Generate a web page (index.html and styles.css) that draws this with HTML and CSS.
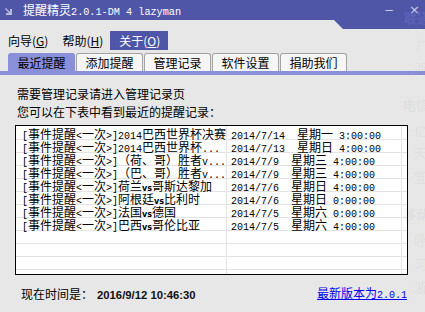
FILE: index.html
```html
<!DOCTYPE html>
<html lang="zh-CN">
<head>
    <meta charset="UTF-8">
    <title>提醒精灵</title>
    <link rel="stylesheet" href="styles.css">
</head>
<body>
    <div class="window">
        <div class="titlebar">
            <svg class="app-icon" width="8" height="8" viewBox="0 0 8 8">
                <polygon points="0,1 1,0 5,4 5,1 7,1 7,7 1,7 1,5 4,5" fill="#b8bad8"/>
            </svg>
            <span class="title">提醒精灵<span class="en">2.0.1-DM 4 lazyman</span></span>
            <span class="ctrl min">−</span>
            <span class="ctrl close">×</span>
        </div>

        <nav class="menu">
            <span class="menu-item">向导(<u>G</u>)</span>
            <span class="menu-item">帮助(<u>H</u>)</span>
            <span class="menu-item active">关于(<u>O</u>)</span>
        </nav>

        <div class="tabs">
            <span class="tab selected">最近提醒</span>
            <span class="tab">添加提醒</span>
            <span class="tab">管理记录</span>
            <span class="tab">软件设置</span>
            <span class="tab">捐助我们</span>
        </div>
        <div class="tab-line"></div>

        <div class="page">
            <p class="hint">需要管理记录请进入管理记录页</p>
            <p class="hint">您可以在下表中看到最近的提醒记录：</p>

            <div class="list">
                <div class="row">
                    <span class="cell name"><span class="en">[</span>事件提醒<span class="en">&lt;</span>一次<span class="en">&gt;]2014</span>巴西世界杯决赛</span>
                    <span class="cell when"><span class="en">2014/7/14  </span>星期一<span class="en"> 3:00:00</span></span>
                </div>
                <div class="row">
                    <span class="cell name"><span class="en">[</span>事件提醒<span class="en">&lt;</span>一次<span class="en">&gt;]2014</span>巴西世界杯<span class="en">...</span></span>
                    <span class="cell when"><span class="en">2014/7/13  </span>星期日<span class="en"> 4:00:00</span></span>
                </div>
                <div class="row">
                    <span class="cell name"><span class="en">[</span>事件提醒<span class="en">&lt;</span>一次<span class="en">&gt;]</span>（荷、哥）胜者<span class="en">v...</span></span>
                    <span class="cell when"><span class="en">2014/7/9  </span>星期三<span class="en"> 4:00:00</span></span>
                </div>
                <div class="row">
                    <span class="cell name"><span class="en">[</span>事件提醒<span class="en">&lt;</span>一次<span class="en">&gt;]</span>（巴、哥）胜者<span class="en">v...</span></span>
                    <span class="cell when"><span class="en">2014/7/9  </span>星期三<span class="en"> 4:00:00</span></span>
                </div>
                <div class="row">
                    <span class="cell name"><span class="en">[</span>事件提醒<span class="en">&lt;</span>一次<span class="en">&gt;]</span>荷兰<span class="vs">vs</span>哥斯达黎加</span>
                    <span class="cell when"><span class="en">2014/7/6  </span>星期日<span class="en"> 4:00:00</span></span>
                </div>
                <div class="row">
                    <span class="cell name"><span class="en">[</span>事件提醒<span class="en">&lt;</span>一次<span class="en">&gt;]</span>阿根廷<span class="vs">vs</span>比利时</span>
                    <span class="cell when"><span class="en">2014/7/6  </span>星期日<span class="en"> 0:00:00</span></span>
                </div>
                <div class="row">
                    <span class="cell name"><span class="en">[</span>事件提醒<span class="en">&lt;</span>一次<span class="en">&gt;]</span>法国<span class="vs">vs</span>德国</span>
                    <span class="cell when"><span class="en">2014/7/5  </span>星期六<span class="en"> 0:00:00</span></span>
                </div>
                <div class="row">
                    <span class="cell name"><span class="en">[</span>事件提醒<span class="en">&lt;</span>一次<span class="en">&gt;]</span>巴西<span class="vs">vs</span>哥伦比亚</span>
                    <span class="cell when"><span class="en">2014/7/5  </span>星期六<span class="en"> 4:00:00</span></span>
                </div>
                <div class="row"><span class="cell name"></span><span class="cell when"></span></div>
                <div class="row"><span class="cell name"></span><span class="cell when"></span></div>
                <div class="row"><span class="cell name"></span><span class="cell when"></span></div>
                <div class="row"><span class="cell name"></span><span class="cell when"></span></div>
            </div>

            <div class="status">
                <span class="now">现在时间是：<b class="clock">2016/9/12 10:46:30</b></span>
                <a class="update" href="#">最新版本为<span class="en">2.0.1</span></a>
            </div>
        </div>

        <!-- desktop text showing through the translucent window -->
        <div class="ghost">
            <span class="g-title" style="top: 8px; left: 404px">联通</span>
            <span style="top: 35px; left: 416px">广</span>
            <span style="top: 58px; left: 414px">浙</span>
            <span class="g-head" style="top: 95px; left: 403px">电信</span>
            <span style="top: 121px; left: 414px">亿</span>
            <span style="top: 143px; left: 414px">天</span>
            <span style="top: 167px; left: 414px">宣</span>
            <span class="g-head" style="top: 204px; left: 403px">移动</span>
            <span style="top: 230px; left: 414px">呼</span>
            <span style="top: 254px; left: 414px">河</span>
            <span style="top: 277px; left: 414px">浙</span>
        </div>
    </div>
</body>
</html>
```

FILE: styles.css
```css
* {
    box-sizing: border-box;
    margin: 0;
    padding: 0;
}

body {
    background: #e7e7e7;
    font-family: "Noto Sans CJK SC", "Noto Sans", sans-serif;
    font-size: 12px;
    color: #000;
}

.window {
    position: relative;
    width: 425px;
    height: 312px;
    overflow: hidden;
    background: #e7e7e7;
}

.en {
    font-family: "Liberation Mono", monospace;
    font-size: 10px;
}

.titlebar {
    height: 29px;
    background: #5056a7;
    clip-path: polygon(0 0, 100% 0, 100% 29px, 343px 29px, 334px 20px, 0 20px);
    display: flex;
    align-items: flex-start;
    color: #fff;
}

.app-icon {
    margin: 8px 0 0 5px;
}

.title {
    margin-left: 10px;
    line-height: 20px;
    font-size: 12px;
}

.title .en {
    font-size: 10.2px;
}

.ctrl {
    color: #c9cbe6;
    line-height: 20px;
    font-family: "DejaVu Sans", sans-serif;
}

.min {
    margin-left: auto;
    font-size: 12px;
}

.close {
    margin: 0 5px 0 15px;
    font-size: 13px;
}

.menu {
    display: flex;
    margin-top: 2px;
    height: 19px;
    padding-left: 1px;
}

.menu-item {
    padding: 0 7px;
    line-height: 19px;
}

.menu-item.active {
    background: #5056a7;
    color: #fff;
    padding: 0 8px 0 9px;
}

.tabs {
    display: flex;
    gap: 1px;
    margin-top: 3px;
    padding-left: 8px;
    height: 18px;
}

.tab {
    width: 67px;
    text-align: center;
    line-height: 17px;
    background: #f6f6f6;
    border: 1px solid #a3a3a3;
    border-bottom: none;
    border-radius: 3px 3px 0 0;
}

.tab.selected {
    background: #8a8fd9;
    border-color: #8a8fd9;
}

.tab-line {
    height: 4px;
    background: #8a8fd9;
}

.page {
    padding: 10px 17px 0 15px;
}

.hint {
    padding-left: 2px;
    line-height: 18px;
}

.list {
    margin-top: 4px;
    height: 150px;
    border: 1px solid #000;
    background: #fff;
    padding-top: 1px;
    overflow: hidden;
}

.row {
    display: flex;
    height: 13px;
    border-bottom: 1px solid #e4e4e4;
}

.cell {
    line-height: 13px;
    white-space: pre;
    clip-path: inset(-4px 0 -4px 0);
}

.name {
    width: 211px;
    padding-left: 6px;
    border-right: 1px solid #e4e4e4;
}

.when {
    width: 175px;
    padding-left: 4px;
    border-right: 1px solid #e4e4e4;
}

.vs {
    font-family: "DejaVu Sans", sans-serif;
    font-size: 8px;
    font-weight: bold;
}

.status {
    display: flex;
    justify-content: space-between;
    align-items: center;
    margin-top: 10px;
    padding-left: 6px;
    line-height: 16px;
}

.clock {
    font-family: "Liberation Sans", sans-serif;
    font-size: 11.3px;
    margin-left: 4px;
    color: #111;
}

.update {
    color: #0000f0;
    text-decoration: underline;
    margin-right: 1px;
}

.ghost span {
    position: absolute;
    white-space: nowrap;
    font-size: 13px;
    color: rgba(0, 0, 0, 0.05);
    pointer-events: none;
}

.ghost .g-title {
    color: rgba(120, 130, 220, 0.3);
    font-weight: bold;
}

.ghost .g-head {
    font-weight: bold;
}
```
